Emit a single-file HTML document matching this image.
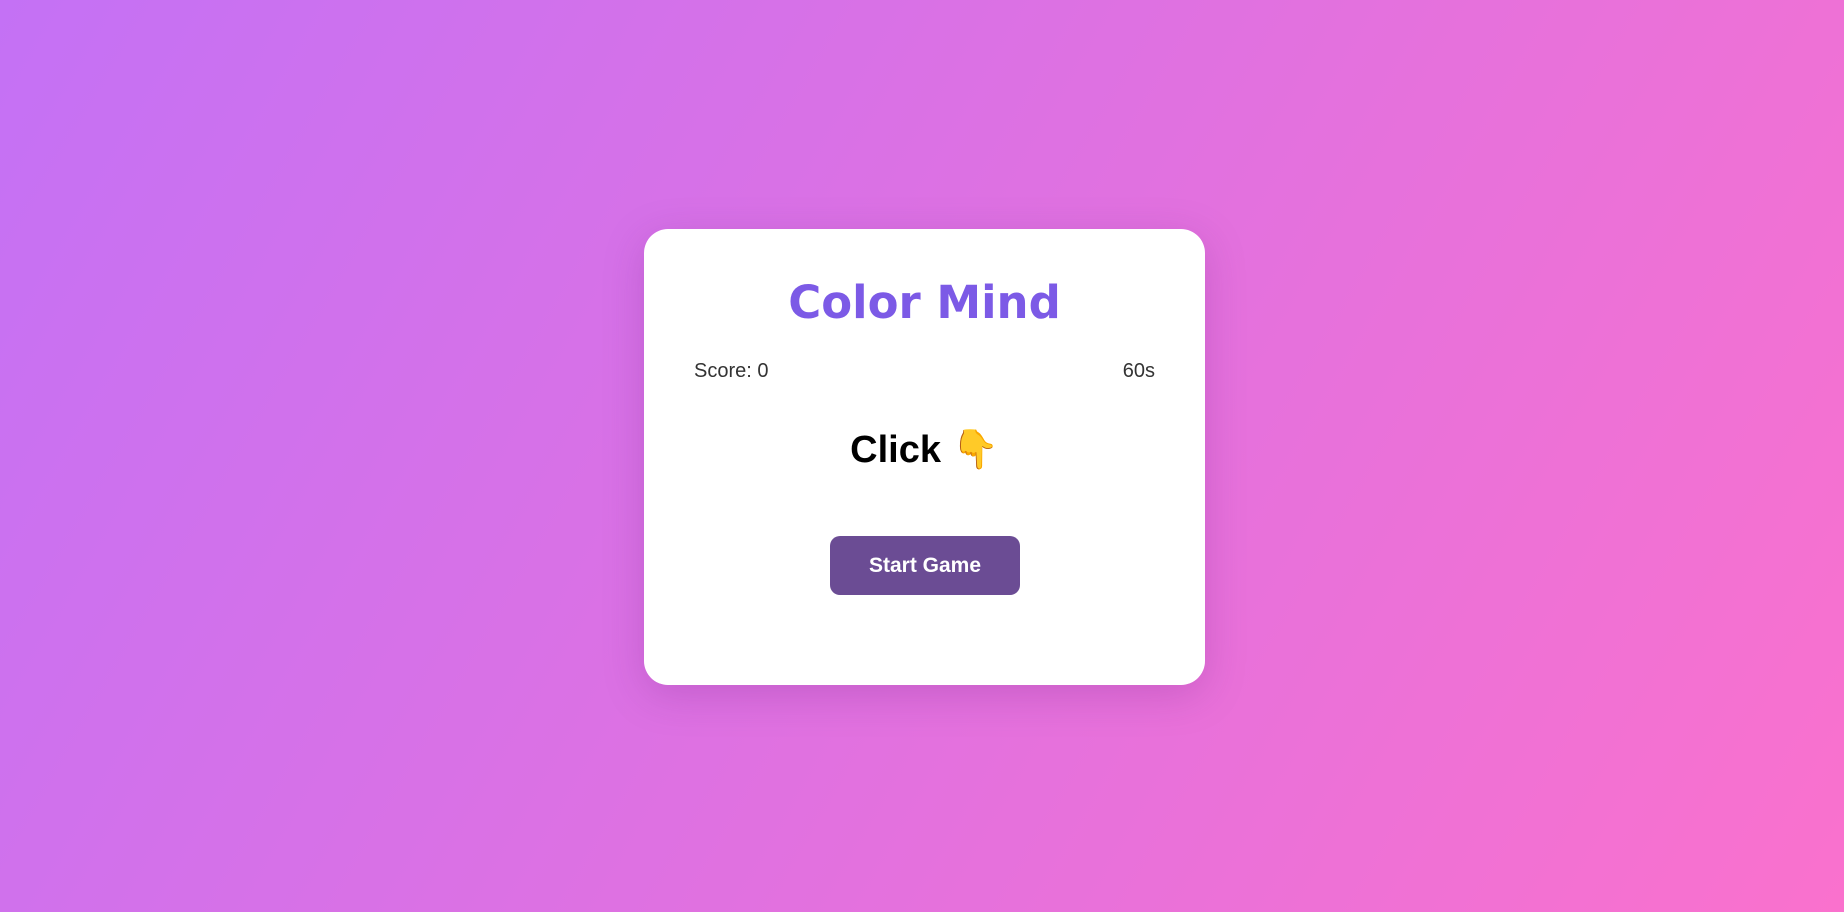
<!DOCTYPE html>
<html><head><meta charset="utf-8"><style>
html,body{margin:0;width:1844px;height:912px;overflow:hidden}
body{background:linear-gradient(120deg,#c471f5 0%,#fa71cd 100%);font-family:"Liberation Sans","DejaVu Sans",sans-serif;position:relative}
.card{position:absolute;left:644px;top:229px;width:561px;height:456px;background:#fff;border-radius:24px;box-shadow:0 10px 40px rgba(120,40,140,.25)}
h1{position:absolute;left:0;right:0;margin:0;text-align:center;top:47px;font-size:45px;font-weight:bold;color:#7c5ae6;letter-spacing:0px;font-family:"DejaVu Sans",sans-serif}
.score{position:absolute;top:131px;left:50px;font-size:20px;color:#333}
.time{position:absolute;top:131px;right:50px;font-size:20px;color:#333}
.click{position:absolute;top:199px;left:0;right:0;text-align:center;font-size:38px;font-weight:bold;color:#000}
.btn{position:absolute;left:186px;top:307px;width:190px;height:59px;background:#6b4c94;border-radius:10px;color:#fff;font-weight:bold;font-size:21px;line-height:59px;text-align:center}
</style></head><body>
<div class="card">
<h1>Color Mind</h1>
<div class="score">Score: 0</div>
<div class="time">60s</div>
<div class="click">Click <span style="color:#f5b93a">👇</span></div>
<div class="btn">Start Game</div>
</div>
</body></html>
